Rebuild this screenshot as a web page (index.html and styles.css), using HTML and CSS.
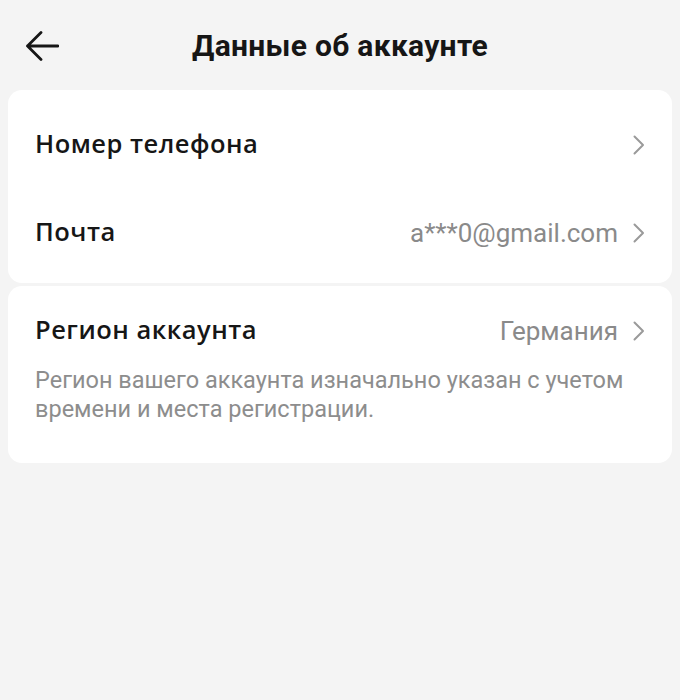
FILE: index.html
```html
<!DOCTYPE html>
<html lang="ru">
<head>
<meta charset="utf-8">
<link rel="stylesheet" href="styles.css">
</head>
<body>
<div class="screen">
  <header class="topbar">
    <button class="back" aria-label="Назад">
      <svg width="34" height="30" viewBox="0 0 34 30"><path d="M16 1.5 L2.5 15 L16 28.5 M2.5 15 H33" fill="none" stroke="#161616" stroke-width="2.8" stroke-linecap="round" stroke-linejoin="round"/></svg>
    </button>
    <h1 class="title">Данные об аккаунте</h1>
  </header>
  <section class="card card-contact">
    <div class="row">
      <span class="label">Номер телефона</span>
      <span class="value"><svg class="chev" width="12" height="20" viewBox="0 0 12 20"><path d="M1.5 1.5 L10 10 L1.5 18.5" fill="none" stroke="#9a9a9a" stroke-width="2" stroke-linecap="round" stroke-linejoin="round"/></svg></span>
    </div>
    <div class="row">
      <span class="label">Почта</span>
      <span class="value">a***0@gmail.com<svg class="chev" width="12" height="20" viewBox="0 0 12 20"><path d="M1.5 1.5 L10 10 L1.5 18.5" fill="none" stroke="#9a9a9a" stroke-width="2" stroke-linecap="round" stroke-linejoin="round"/></svg></span>
    </div>
  </section>
  <section class="card card-region">
    <div class="row row-region">
      <span class="label">Регион аккаунта</span>
      <span class="value">Германия<svg class="chev" width="12" height="20" viewBox="0 0 12 20"><path d="M1.5 1.5 L10 10 L1.5 18.5" fill="none" stroke="#9a9a9a" stroke-width="2" stroke-linecap="round" stroke-linejoin="round"/></svg></span>
    </div>
    <p class="note">Регион вашего аккаунта изначально указан с учетом времени и места регистрации.</p>
  </section>
</div>
</body>
</html>
```
FILE: styles.css
```css
* { box-sizing: border-box; }
html, body { margin: 0; padding: 0; }
body {
  background: #f4f4f4;
  font-family: Roboto, "Noto Sans", "Liberation Sans", sans-serif;
  color: #161616;
  width: 680px;
  height: 700px;
  overflow: hidden;
}
.screen { padding: 0 8px; }
.topbar {
  position: relative;
  height: 90px;
  display: flex;
  align-items: center;
  justify-content: center;
}
.back {
  position: absolute;
  left: 17px;
  top: 31px;
  border: 0;
  background: none;
  padding: 0;
  display: flex;
}
.title {
  margin: 0;
  font-size: 30px;
  font-weight: 700;
  letter-spacing: 0.3px;
  padding-left: 0;
}
.card {
  background: #fff;
  border-radius: 14px;
}
.card-contact { padding: 11px 0 6px; }
.card-region { margin-top: 3px; padding: 0 0 39px; }
.row {
  height: 88px;
  display: flex;
  align-items: center;
  justify-content: space-between;
  padding: 0 27px 0 27px;
}
.row-region { height: 90px; }
.label {
  font-family: "Open Sans", Roboto, sans-serif;
  font-size: 25.5px;
  font-weight: 600;
  letter-spacing: 0.5px;
  padding-bottom: 5px;
}
.value {
  display: flex;
  align-items: center;
  gap: 15px;
  font-size: 26px;
  color: #8a8a8a;
}
.chev { display: block; }
.note {
  margin: -10px 0 0;
  padding: 0 30px 0 27px;
  font-size: 23.5px;
  line-height: 29px;
  color: #8d8d8d;
}
```
